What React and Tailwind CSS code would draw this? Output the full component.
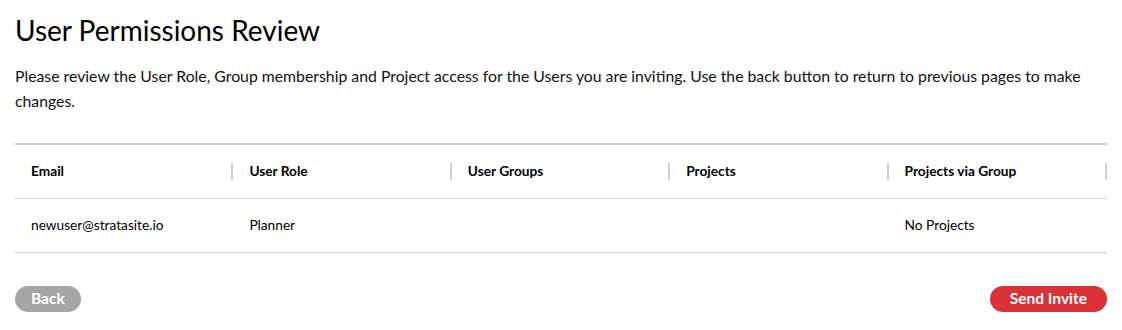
const columns = ['Email', 'User Role', 'User Groups', 'Projects', 'Projects via Group'];

const rows = [
  ['newuser@stratasite.io', 'Planner', '', '', 'No Projects'],
];

const App = () => {
  return (
    <div className="bg-white text-black px-[15px] pt-[14px]" style={{ fontFamily: 'Lato, "Open Sans", sans-serif' }}>
      <h1 className="text-[28px] leading-[32px] font-normal">User Permissions Review</h1>

      <p className="mt-[17px] text-[15.8px] leading-[25px] text-[#111]">
        Please review the User Role, Group membership and Project access for the Users you are inviting. Use the back button to return to previous pages to make changes.
      </p>

      {/* Review table */}
      <div className="mt-[30px] border-t-2 border-[#cfcfcf]">
        <div className="grid grid-cols-5 h-[54px] items-center border-b border-[#d4d4d4]">
          {columns.map((col) => (
            <div key={col} className="flex items-center justify-between pl-4">
              <span className="text-[13.7px] font-bold">{col}</span>
              <span className="w-[2px] h-[17px] bg-[#cfcfcf]" />
            </div>
          ))}
        </div>
        {rows.map((row, i) => (
          <div key={i} className="grid grid-cols-5 h-[54px] items-center border-b border-[#d4d4d4]">
            {row.map((cell, j) => (
              <div key={j} className="pl-4 text-[13.7px]">{cell}</div>
            ))}
          </div>
        ))}
      </div>

      {/* Actions */}
      <div className="flex justify-between items-center mt-[33px]">
        <button className="h-[26px] px-[16px] rounded-full bg-[#a6a6a6] text-white text-[15.5px] font-bold">Back</button>
        <button className="h-[26px] px-[20px] rounded-full bg-[#da3236] text-white text-[15.5px] font-bold">Send Invite</button>
      </div>
    </div>
  );
};

export default App;
